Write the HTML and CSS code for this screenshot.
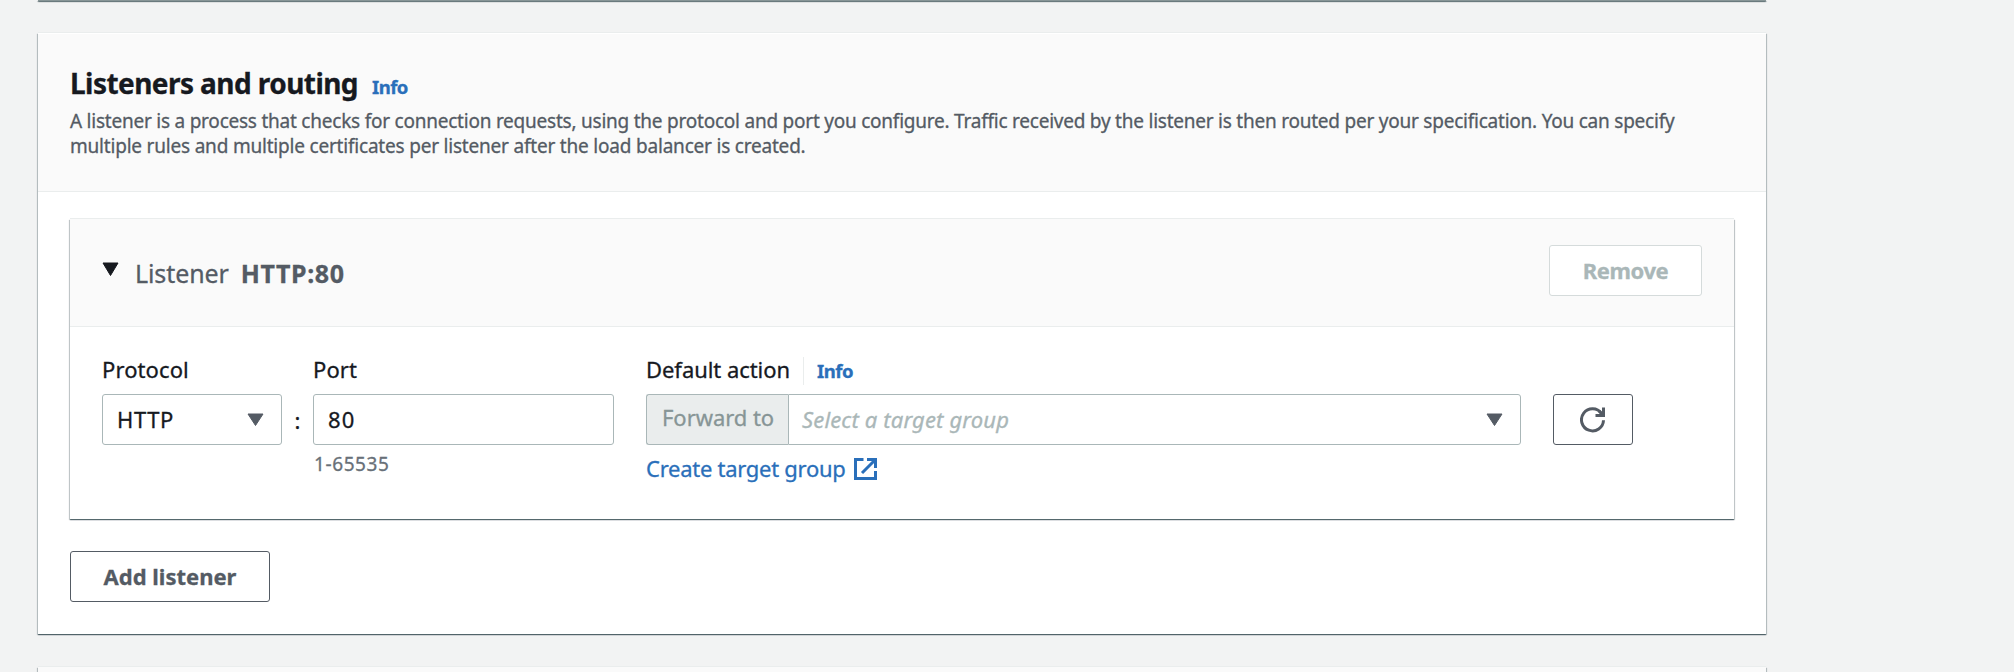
FILE: index.html
```html
<!DOCTYPE html>
<html lang="en">
<head>
<meta charset="utf-8">
<title>Listeners and routing</title>
<link rel="stylesheet" href="styles.css">
</head>
<body>
<main class="page">
  <section class="panel panel-previous"></section>

  <section class="panel panel-main">
    <header class="panel-header">
      <div class="title-row">
        <h2 class="title">Listeners and routing</h2>
        <a class="info">Info</a>
      </div>
      <p class="description"><span class="desc-first">A listener is a process that checks for connection requests, using the protocol and port you configure. Traffic received by the listener is then routed per your specification. You can specify</span><br><span class="desc-second">multiple rules and multiple certificates per listener after the load balancer is created.</span></p>
    </header>

    <div class="panel-body">
      <article class="panel listener">
        <header class="listener-header">
          <svg class="caret" width="17" height="15" viewBox="0 0 17 15"><path d="M1 1h15L8.500 13.500z" fill="#16191f" stroke="#16191f" stroke-linejoin="round"/></svg>
          <h3 class="listener-title"><span class="listener-kind">Listener</span><b class="listener-name">HTTP:80</b></h3>
          <button class="button button-disabled">Remove</button>
        </header>

        <div class="listener-body">
          <div class="field protocol">
            <label class="label label-protocol">Protocol</label>
            <div class="control select">
              <span class="http">HTTP</span>
              <svg width="17" height="14" viewBox="0 0 17 14"><path d="M1 1h15L8.500 12.500z" fill="#545b64" stroke="#545b64" stroke-linejoin="round"/></svg>
            </div>
          </div>
          <span class="colon">:</span>
          <div class="field port">
            <label class="label label-port">Port</label>
            <div class="control"><span class="port-value">80</span></div>
            <span class="hint">1-65535</span>
          </div>
          <div class="field action">
            <div class="label-row">
              <label class="label label-action">Default action</label>
              <a class="info info-divided">Info</a>
            </div>
            <div class="action-control">
              <span class="addon">Forward to</span>
              <div class="control select target">
                <i class="placeholder">Select a target group</i>
                <svg width="17" height="14" viewBox="0 0 17 14"><path d="M1 1h15L8.500 12.500z" fill="#545b64" stroke="#545b64" stroke-linejoin="round"/></svg>
              </div>
            </div>
            <a class="link"><span>Create target group</span>
              <svg width="23" height="24" viewBox="0 0 23 24" fill="none" stroke="#2a6fba" stroke-width="3"><path d="M9.500 2.500h-8v19h20V14M13 2.500h8.500V11M21 3L8 16"/></svg>
            </a>
          </div>
          <button class="button refresh">
            <svg width="26" height="26" viewBox="0 0 26 26" fill="none" stroke="#545b64" stroke-width="3"><path d="M23.500 13.200A11 11 0 1 1 21.500 6.500"/><path d="M23.500 .5V8.500H15.500M23 8l-4-4"/></svg>
          </button>
        </div>
      </article>
      <button class="button add">Add listener</button>
    </div>
  </section>

  <section class="panel panel-next"></section>
</main>
</body>
</html>
```

FILE: styles.css
```css
* { box-sizing: border-box; }

body {
  margin: 0;
  height: 672px;
  overflow: hidden;
  background: #f2f3f3;
  color: #16191f;
  font: 22px/28px "Noto Sans", "Open Sans", sans-serif;
  -webkit-text-stroke: .3px currentColor;
}

.page {
  display: flex;
  flex-direction: column;
  width: 1766px;
  padding-left: 38px;
}

.panel {
  background: #fff;
  box-shadow: 0 -1px 0 #eaeded, 0 1px 1px 0 rgba(0, 28, 36, .5), 1px 1px 1px 0 rgba(0, 28, 36, .18), -1px 1px 1px 0 rgba(0, 28, 36, .18);
}

.panel-previous { height: 1px; background: #879596; }
.panel-main { margin: 32px 0 33px; }
.panel-next { height: 20px; background: #fafafa; }

.panel-header {
  padding: 31px 32px 32px;
  background: #fafafa;
  border-top: 1px solid #fff;
  border-bottom: 1px solid #eaeded;
}

.title-row { display: flex; align-items: baseline; gap: 14px; }
.title { margin: 0; font-size: 28px; line-height: 36px; letter-spacing: -.56px; }

.info {
  color: #2a6fba;
  font-size: 18.5px;
  line-height: 28px;
  font-weight: 700;
  letter-spacing: -.5px;
}

.description {
  margin: 8px 0 0;
  color: #545b64;
  font-size: 19px;
  line-height: 25px;
  white-space: nowrap;
}
.desc-first { letter-spacing: -.23px; }
.desc-second { letter-spacing: -.2px; }

.panel-body { padding: 27px 32px 32px; }

.listener-header {
  display: flex;
  align-items: flex-start;
  height: 108px;
  padding: 26px 32px 0;
  background: #fafafa;
  border-bottom: 1px solid #eaeded;
}
.caret { margin-top: 17px; }
.listener-title {
  display: flex;
  gap: 12px;
  margin: 11px auto 0 16px;
  color: #545b64;
  font-size: 25px;
  line-height: 34px;
  font-weight: 400;
}
.listener-kind { letter-spacing: -.1px; }
.listener-name { letter-spacing: .6px; }

.button {
  height: 51px;
  padding: 0 32px;
  background: #fff;
  border: 1px solid #545b64;
  border-radius: 3px;
  color: #545b64;
  font: 700 22px/49px "Noto Sans", "Open Sans", sans-serif;
  letter-spacing: 0;
}
.button-disabled {
  width: 153px;
  border-color: #d5dbdb;
  color: #aab7b8;
  letter-spacing: -.4px;
}

.listener-body {
  display: flex;
  align-items: flex-start;
  height: 192px;
  padding: 28px 32px 0;
}
.listener { margin-bottom: 32px; }

.field { display: flex; flex-direction: column; align-items: flex-start; }
.protocol { width: 180px; }
.port { width: 301px; }
.action { width: 875px; margin-left: 32px; }

.label { margin-bottom: 11px; line-height: 28px; }
.label-protocol { letter-spacing: .1px; }
.label-port { letter-spacing: .1px; }
.label-action { letter-spacing: -.05px; }
.label-row { display: flex; align-items: baseline; height: 39px; }
.info-divided {
  margin-left: 13px;
  padding-left: 13px;
  border-left: 1px solid #eaeded;
}

.control {
  display: flex;
  align-items: center;
  width: 100%;
  height: 51px;
  padding: 0 17px 0 14px;
  background: #fff;
  border: 1px solid #aab7b8;
  border-radius: 3px;
  line-height: 49px;
}
.select { justify-content: space-between; }
.http { letter-spacing: .6px; }
.port-value { letter-spacing: 1.2px; }

.colon { width: 31px; margin-top: 51px; text-align: center; }
.hint { margin-top: 7px; padding-left: 1px; color: #687078; font-size: 19px; line-height: 25px; letter-spacing: .6px; }

.action-control { display: flex; width: 100%; }
.addon {
  flex: none;
  width: 142px;
  height: 51px;
  padding-left: 15px;
  background: #eaeded;
  border: 1px solid #aab7b8;
  border-right: 0;
  border-radius: 3px 0 0 3px;
  color: #879596;
  line-height: 45px;
  letter-spacing: -.05px;
}
.target { padding-left: 13px; border-radius: 0 3px 3px 0; }
.placeholder { color: #aab7b8; letter-spacing: .15px; }

.link { display: flex; gap: 8px; margin-top: 9px; color: #2a6fba; letter-spacing: -.27px; }
.link svg { margin-top: 3px; }

.refresh { width: 80px; margin: 39px 0 0 32px; padding: 0; }
.refresh svg { display: block; margin: 0 auto; }
.add { display: block; width: 200px; }
```
